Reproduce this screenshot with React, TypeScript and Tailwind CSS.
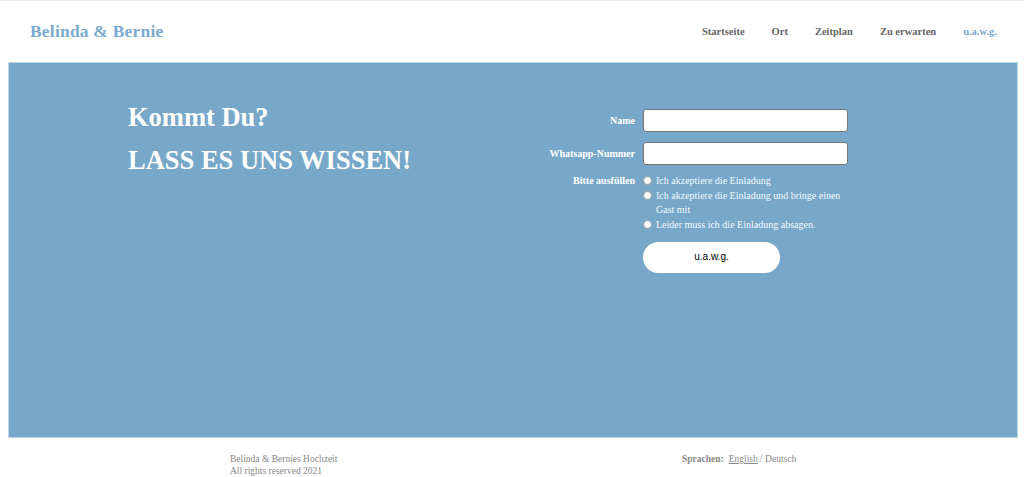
import React, { useState } from 'react';

const navLinks = ['Startseite', 'Ort', 'Zeitplan', 'Zu erwarten', 'u.a.w.g.'];

const options = [
  'Ich akzeptiere die Einladung',
  'Ich akzeptiere die Einladung und bringe einen Gast mit',
  'Leider muss ich die Einladung absagen.',
];

const App = () => {
  const [name, setName] = useState('');
  const [phone, setPhone] = useState('');
  const [answer, setAnswer] = useState('');

  return (
    <div className="min-h-[477px] bg-white font-['Liberation_Serif',serif] border-t border-[#e8e8e8]">
      {/* Header */}
      <header className="h-[61px] flex items-center justify-between pl-[30px] pr-[27px]">
        <a className="text-[17.5px] font-bold text-[#7aaad0] tracking-[0.2px]">Belinda &amp; Bernie</a>
        <nav className="flex gap-[27px] text-[10.5px] font-bold">
          {navLinks.map((link) => (
            <a
              key={link}
              className={link === 'u.a.w.g.' ? 'text-[#7aaad0]' : 'text-[#666]'}
            >
              {link}
            </a>
          ))}
        </nav>
      </header>

      {/* RSVP panel */}
      <section className="ml-2 mr-[6px] h-[376px] bg-[#77a8ca] border border-[#bcd6e8] flex pl-[119px] pt-[33px]">
        <div className="w-[417px] text-white font-bold text-[26.5px] leading-[43px]">
          <h2>Kommt Du?</h2>
          <h2>LASS ES UNS WISSEN!</h2>
        </div>

        <form className="pt-[13px] text-white" onSubmit={(e) => e.preventDefault()}>
          <div className="flex items-center gap-2 mb-[10px]">
            <label className="w-[90px] text-right text-[10px] font-bold">Name</label>
            <input
              value={name}
              onChange={(e) => setName(e.target.value)}
              className="w-[205px] h-[23px] bg-white rounded-[3px] border border-[#777] outline-none text-black text-xs px-1"
            />
          </div>
          <div className="flex items-center gap-2 mb-[9px]">
            <label className="w-[90px] text-right text-[10px] font-bold">Whatsapp-Nummer</label>
            <input
              value={phone}
              onChange={(e) => setPhone(e.target.value)}
              className="w-[205px] h-[23px] bg-white rounded-[3px] border border-[#777] outline-none text-black text-xs px-1"
            />
          </div>
          <div className="flex gap-2">
            <span className="w-[90px] text-right text-[10px] font-bold leading-[14.7px]">Bitte ausfüllen</span>
            <div className="w-[205px] text-[10px] leading-[14.7px] text-[#f4f8fb]">
              {options.map((opt) => (
                <label key={opt} className="flex items-start gap-[4px]">
                  <span
                    onClick={() => setAnswer(opt)}
                    className="mt-[2px] shrink-0 w-[9px] h-[9px] rounded-full bg-white border border-[#999] flex items-center justify-center"
                  >
                    {answer === opt && <span className="w-[5px] h-[5px] rounded-full bg-[#333]" />}
                  </span>
                  <span>{opt}</span>
                </label>
              ))}
              <button
                type="submit"
                className="mt-[9px] w-[137px] h-[31px] rounded-full bg-white text-black text-[10px] font-['Liberation_Sans',sans-serif]"
              >
                u.a.w.g.
              </button>
            </div>
          </div>
        </form>
      </section>

      {/* Footer */}
      <footer className="flex pt-[16px] text-[9.5px] leading-[11.5px] text-[#888]">
        <div className="ml-[230px] w-[452px]">
          <p>Belinda &amp; Bernies Hochzeit</p>
          <p>All rights reserved 2021</p>
        </div>
        <div className="flex gap-[5px]">
          <span className="font-bold">Sprachen:</span>
          <span>
            <a className="underline">English</a> / Deutsch
          </span>
        </div>
      </footer>
    </div>
  );
};

export default App;
